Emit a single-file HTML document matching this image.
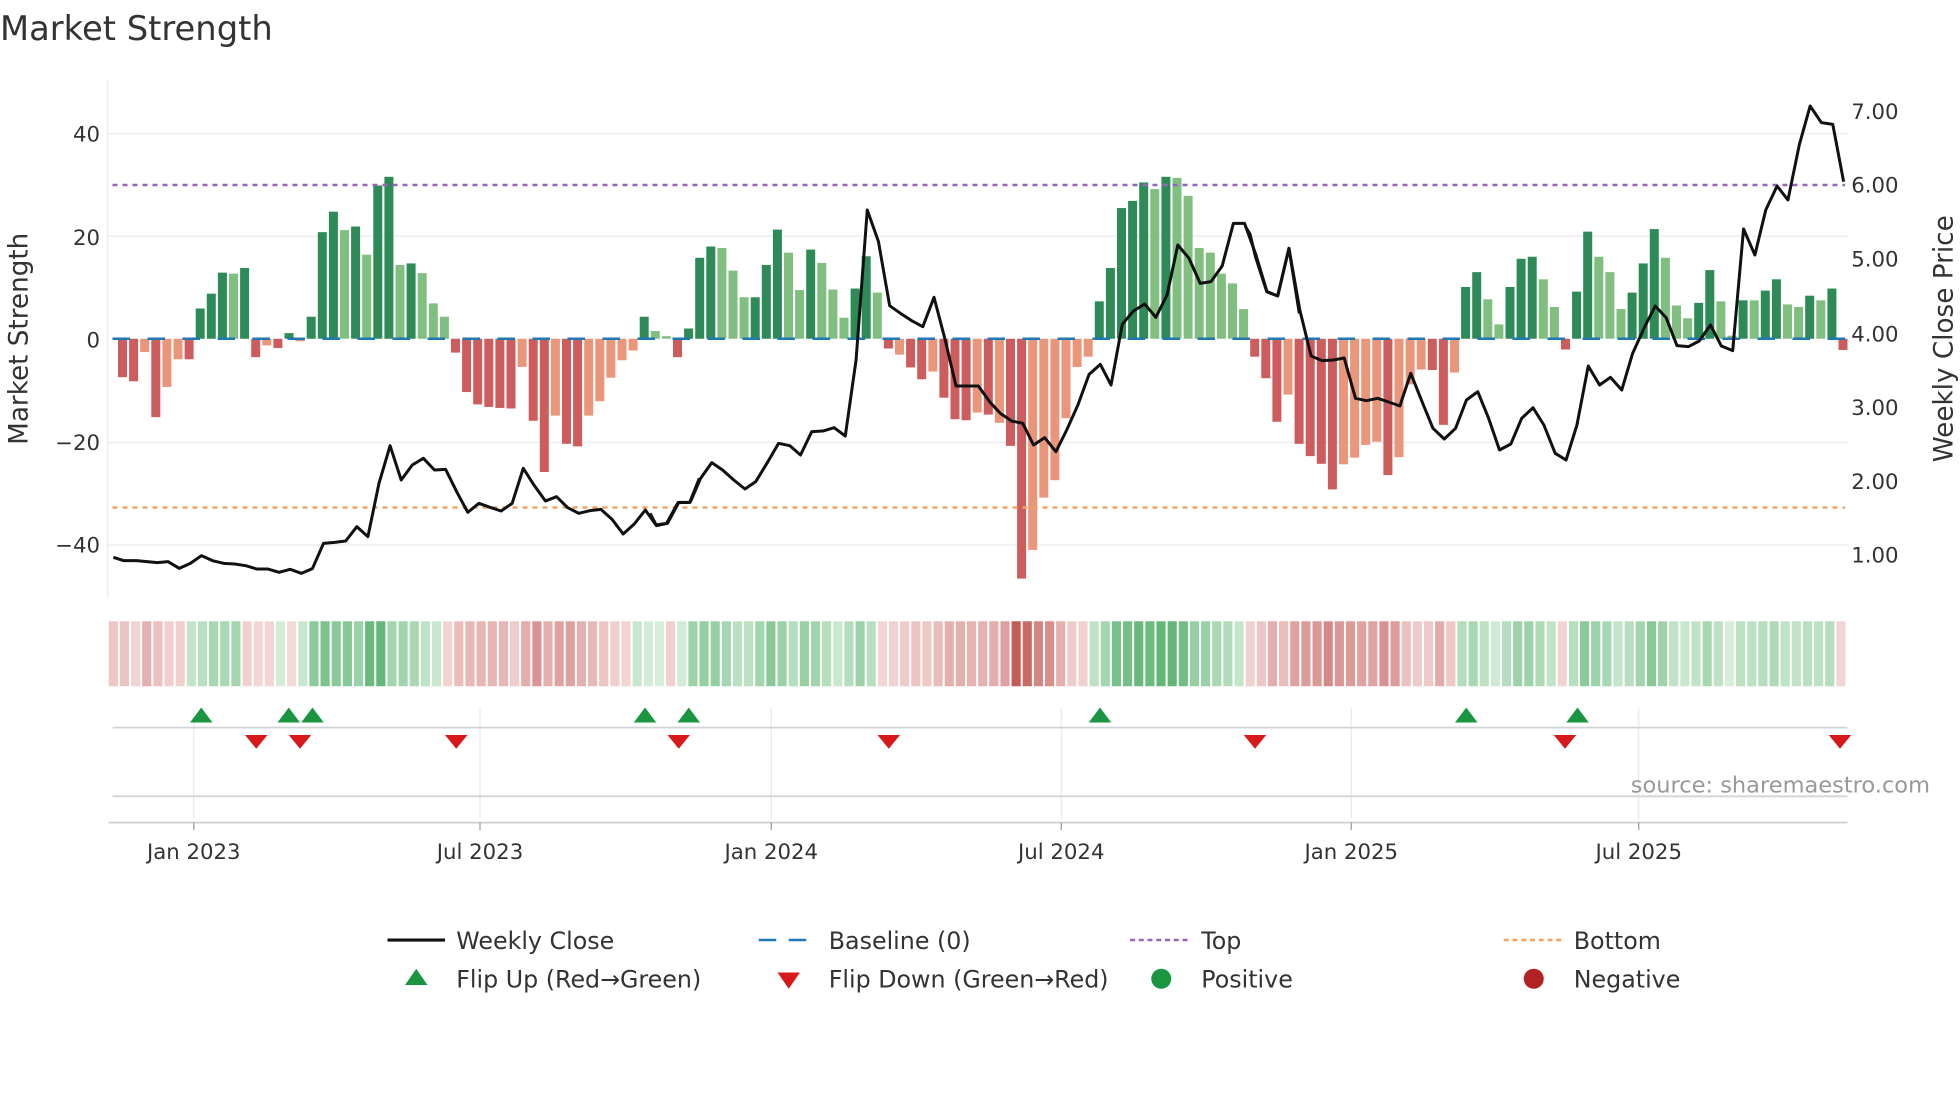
<!DOCTYPE html>
<html><head><meta charset="utf-8"><style>
html,body{margin:0;padding:0;background:#fff;}
svg{display:block;font-family:"DejaVu Sans","Liberation Sans",sans-serif;}
</style></head><body>
<svg id="s" width="1960" height="1102" viewBox="0 0 1568 881.6" xmlns="http://www.w3.org/2000/svg">
<rect width="1568" height="882" fill="#fff"/>
<text x="0" y="32" font-size="27" fill="#333">Market Strength</text>
<g stroke="#eceef2" stroke-width="1.2">
<line x1="86" y1="107" x2="1478" y2="107"/><line x1="86" y1="189" x2="1478" y2="189"/>
<line x1="86" y1="354" x2="1478" y2="354"/><line x1="86" y1="436" x2="1478" y2="436"/>
<line x1="86" y1="64" x2="86" y2="478"/>
</g>
<g font-size="17" fill="#333" text-anchor="end">
<text x="80" y="113">40</text><text x="80" y="196">20</text><text x="80" y="278">0</text>
<text x="80" y="360">−20</text><text x="80" y="442">−40</text>
</g>
<g font-size="17" fill="#333">
<text x="1481" y="95">7.00</text><text x="1481" y="154">6.00</text><text x="1481" y="213">5.00</text>
<text x="1481" y="273">4.00</text><text x="1481" y="332">3.00</text><text x="1481" y="391">2.00</text>
<text x="1481" y="450">1.00</text>
</g>
<text transform="translate(22,271) rotate(-90)" font-size="21" fill="#333" text-anchor="middle">Market Strength</text>
<text transform="translate(1562,271) rotate(-90)" font-size="21" fill="#333" text-anchor="middle">Weekly Close Price</text>
<g id="bars"></g>
<line x1="90" y1="271" x2="1476" y2="271" stroke="#1f77b4" stroke-width="2" stroke-dasharray="14,14"/>
<line x1="90" y1="148" x2="1476" y2="148" stroke="#9467bd" stroke-width="2" stroke-dasharray="4,4"/>
<line x1="90" y1="406" x2="1476" y2="406" stroke="#f4a460" stroke-width="2" stroke-dasharray="4,4"/>
<g id="price" fill="none" stroke="#111" stroke-width="3" stroke-linejoin="round"></g>
<g id="heat"></g>
<g stroke="#e8eaee" stroke-width="1">
<line x1="155" y1="566" x2="155" y2="655"/><line x1="384" y1="566" x2="384" y2="655"/>
<line x1="617" y1="566" x2="617" y2="655"/><line x1="849" y1="566" x2="849" y2="655"/>
<line x1="1081" y1="566" x2="1081" y2="655"/><line x1="1311" y1="566" x2="1311" y2="655"/>
</g>
<line x1="90" y1="582" x2="1478" y2="582" stroke="#d2d4d8" stroke-width="1.5"/>
<line x1="90" y1="637" x2="1478" y2="637" stroke="#d2d4d8" stroke-width="1.5"/>
<line x1="87" y1="658" x2="1478" y2="658" stroke="#cfd1d5" stroke-width="1.5"/>
<g stroke="#999" stroke-width="1">
<line x1="155" y1="658" x2="155" y2="664"/><line x1="384" y1="658" x2="384" y2="664"/>
<line x1="617" y1="658" x2="617" y2="664"/><line x1="849" y1="658" x2="849" y2="664"/>
<line x1="1081" y1="658" x2="1081" y2="664"/><line x1="1311" y1="658" x2="1311" y2="664"/>
</g>
<g id="flips"></g>
<g font-size="17" fill="#333" text-anchor="middle">
<text x="155" y="687">Jan 2023</text><text x="384" y="687">Jul 2023</text><text x="617" y="687">Jan 2024</text>
<text x="849" y="687">Jul 2024</text><text x="1081" y="687">Jan 2025</text><text x="1311" y="687">Jul 2025</text>
</g>
<text x="1544" y="634" font-size="18" fill="#999" text-anchor="end">source: sharemaestro.com</text>
<g font-size="19" fill="#333">
<line x1="310" y1="752" x2="356" y2="752" stroke="#111" stroke-width="2.5"/>
<text x="365" y="759">Weekly Close</text>
<line x1="607" y1="752" x2="653" y2="752" stroke="#1f77b4" stroke-width="2" stroke-dasharray="14,10"/>
<text x="663" y="759">Baseline (0)</text>
<line x1="904" y1="752" x2="950" y2="752" stroke="#9467bd" stroke-width="2" stroke-dasharray="4,3"/>
<text x="961" y="759">Top</text>
<line x1="1203" y1="752" x2="1249" y2="752" stroke="#f4a460" stroke-width="2" stroke-dasharray="4,3"/>
<text x="1259" y="759">Bottom</text>
<polygon points="324,788 342,788 333,775" fill="#1a9641"/>
<text x="365" y="790">Flip Up (Red→Green)</text>
<polygon points="622,778 640,778 631,791" fill="#d7191c"/>
<text x="663" y="790">Flip Down (Green→Red)</text>
<circle cx="929" cy="783" r="8" fill="#1a9641"/>
<text x="961" y="790">Positive</text>
<circle cx="1227" cy="783" r="8" fill="#b22222"/>
<text x="1259" y="790">Negative</text>
</g>
</svg>
<script>
var NS="http://www.w3.org/2000/svg";
function el(p,t,a){var e=document.createElementNS(NS,t);for(var k in a)e.setAttribute(k,a[k]);p.appendChild(e);return e;}
var d="-7.5R,-8.3R,-2.6O,-15.3R,-9.4O,-4O,-4R,5.9D,8.8D,12.9D,12.7L,13.8D,-3.6R,-1.3O,-1.8R,1.1D,-0.5O,4.3D,20.8D,24.8D,21.2L,21.9D,16.4L,29.9D,31.6D,14.4L,14.7D,12.8L,6.9L,4.3L,-2.7R,-10.4R,-12.8R,-13.3R,-13.5R,-13.6R,-5.5O,-16R,-26R,-15O,-20.5R,-21R,-15O,-12.2O,-7.6O,-4.2O,-2.3O,4.3D,1.5L,0.5L,-3.6R,2D,15.8D,18D,17.7L,13.3L,8.1L,8.1D,14.4D,21.3D,16.8L,9.5L,17.4D,14.8L,9.6L,4.1L,9.8D,16.1D,9L,-1.9R,-3.1O,-5.6R,-7.9R,-6.4O,-11.5R,-15.7R,-15.9R,-14.4O,-14.8R,-16.4O,-20.9R,-46.8R,-41.2O,-31O,-27.6O,-15.5O,-5.5O,-3.5O,7.3D,13.8D,25.5D,26.9D,30.5D,29.2L,31.6D,31.4L,27.9L,17.7L,16.8L,12.7L,10.8L,5.8L,-3.5R,-7.7R,-16.2R,-10.9O,-20.5R,-22.9R,-24.4R,-29.4R,-24.5O,-23.2O,-20.7O,-20.1O,-26.6R,-23.1O,-8.9O,-6O,-6.1R,-16.8R,-6.6O,10.1D,13D,7.7L,2.8L,10.1D,15.6D,16D,11.6L,6.2L,-2.1R,9.2D,20.9D,16L,13L,5.8L,9D,14.7D,21.4D,15.8L,6.5L,4L,7D,13.4D,7.3L,0.6L,7.5D,7.5L,9.4D,11.6D,6.7L,6.2L,8.4D,7.5L,9.8D,-2.2R".split(",");
var C={D:"#2e8b57",L:"#80bf80",R:"#cd5c5c",O:"#e9967a"};
var bars=document.getElementById("bars"),heat=document.getElementById("heat");
function mix(a,b,t){var r=[];for(var i=0;i<3;i++)r.push(Math.round(a[i]+(b[i]-a[i])*t));return "rgb("+r.join(",")+")";}
var n=d.length,hw=(1478-87)/n;
d.forEach(function(s,i){var v=parseFloat(s),c=s.slice(-1),x=98+i*8.88,y0=271,y=271-v*4.1;
el(bars,"rect",{x:x-3.6,y:Math.min(y0,y),width:7.2,height:Math.max(0.8,Math.abs(y-y0)),fill:C[c]});
var col;if(v>=0){col=mix([216,239,220],[98,182,118],Math.min(1,v/32));}else{col=mix([245,218,218],[196,90,85],Math.min(1,-v/47));}
el(heat,"rect",{x:87+i*hw,y:497,width:hw-1.6,height:52,fill:col});
});
var P=[
["translate(80,64) scale(0.30616,0.26667)","35,1432 62,1442 95,1442 150,1448 178,1445 207,1465 236,1450 265,1427 294,1442 323,1450 352,1452 381,1457 410,1467 439,1467 468,1477 497,1468 526,1480 555,1466 584,1390 613,1387 642,1383 671,1340 700,1370 729,1210 758,1097 787,1200 816,1155 845,1135 874,1170 903,1168 932,1235 961,1297 990,1270 1019,1282 1048,1293 1077,1270 1106,1165 1135,1217 1164,1263 1193,1250 1222,1283 1251,1300 1280,1292 1309,1288 1338,1318 1367,1362 1396,1332 1425,1290 1454,1337 1483,1330 1512,1268 1541,1267 1566,1195"],
["translate(520,64) scale(0.3317,0.26667)","0,1300 15,1335 40,1330 68,1267 97,1267 122,1195 149,1148 175,1170 202,1200 229,1227 255,1205 282,1150 310,1090 337,1097 363,1125 390,1055 417,1053 444,1043 471,1068 497,840 524,390 551,485 578,677 604,700 631,722 658,740 685,652 712,780 738,918 765,918 792,918 819,965 845,1000 872,1023 899,1030 925,1095 952,1073 979,1115 1005,1050 1032,975 1059,883 1086,853 1112,915 1139,733 1166,693 1193,672 1220,712 1247,645 1273,495 1300,535 1327,610 1353,605 1380,558 1407,430 1434,430 1461,523 1488,635 1514,648 1541,505 1566,700"],
["translate(1000,64) scale(0.36225,0.26667)","-10,440 0,462 12,530 37,635 61,648 86,505 110,690 135,828 159,842 184,840 208,834 233,955 257,962 282,955 306,966 331,978 355,880 380,965 404,1045 429,1077 454,1045 478,960 503,935 527,1015 551,1110 576,1092 600,1015 625,983 649,1035 674,1120 698,1140 722,1035 747,858 772,915 796,892 821,930 845,820 870,745 895,678 919,713 943,797 968,800 992,783 1017,735 1041,798 1066,812 1090,447 1115,525 1139,390 1164,318 1188,360 1213,195 1237,78 1262,128 1287,133 1311,305"]];
var pg=document.getElementById("price");
P.forEach(function(p){var g=el(pg,"g",{transform:p[0]});el(g,"polyline",{points:p[1],"vector-effect":"non-scaling-stroke"});});
var f=document.getElementById("flips");
[161,231,250,516,551,880,1173,1262].forEach(function(x){el(f,"polygon",{points:(x-9)+",578 "+(x+9)+",578 "+x+",566",fill:"#1a9641"});});
[205,240,365,543,711,1004,1252,1472].forEach(function(x){el(f,"polygon",{points:(x-9)+",588 "+(x+9)+",588 "+x+",599",fill:"#d7191c"});});
</script>
</body></html>
